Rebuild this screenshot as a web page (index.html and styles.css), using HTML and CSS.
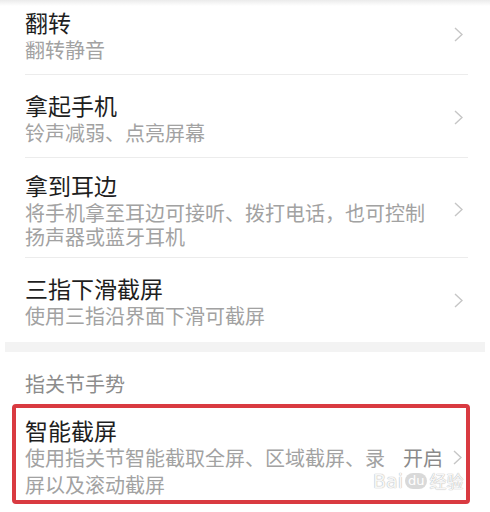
FILE: index.html
```html
<!DOCTYPE html>
<html lang="zh-CN">
<head>
<meta charset="utf-8">
<title>手势设置</title>
<link rel="stylesheet" href="styles.css">
</head>
<body>
<div class="screen">
  <div class="group">
    <div class="row row-first">
      <div class="row-text">
        <div class="title">翻转</div>
        <div class="sub">翻转静音</div>
      </div>
      <svg class="chev" viewBox="0 0 9 15"><polyline points="1,1 8,7.5 1,14"/></svg>
    </div>
    <div class="row">
      <div class="row-text">
        <div class="title">拿起手机</div>
        <div class="sub">铃声减弱、点亮屏幕</div>
      </div>
      <svg class="chev" viewBox="0 0 9 15"><polyline points="1,1 8,7.5 1,14"/></svg>
    </div>
    <div class="row row-multi">
      <div class="row-text">
        <div class="title">拿到耳边</div>
        <div class="sub">将手机拿至耳边可接听、拨打电话，也可控制扬声器或蓝牙耳机</div>
      </div>
      <svg class="chev" viewBox="0 0 9 15"><polyline points="1,1 8,7.5 1,14"/></svg>
    </div>
    <div class="row row-last">
      <div class="row-text">
        <div class="title">三指下滑截屏</div>
        <div class="sub">使用三指沿界面下滑可截屏</div>
      </div>
      <svg class="chev" viewBox="0 0 9 15"><polyline points="1,1 8,7.5 1,14"/></svg>
    </div>
  </div>
  <div class="band"></div>
  <div class="section-header">指关节手势</div>
  <div class="highlight">
    <div class="row-text hl-text">
      <div class="title">智能截屏</div>
      <div class="sub">使用指关节智能截取全屏、区域截屏、录屏以及滚动截屏</div>
    </div>
    <span class="value">开启</span>
    <svg class="chev" viewBox="0 0 9 15"><polyline points="1,1 8,7.5 1,14"/></svg>
    <div class="watermark"><span class="wm-bai">Bai</span><span class="wm-du">du</span><span class="wm-jy">经验</span></div>
  </div>
</div>
</body>
</html>
```
FILE: styles.css
```css
html, body {
  margin: 0;
  padding: 0;
  background: #ffffff;
}
body {
  font-family: "Noto Sans CJK SC", "Noto Sans", sans-serif;
}
.screen {
  width: 490px;
  height: 512px;
  overflow: hidden;
  background: linear-gradient(#ebebeb 0, #ffffff 6px) no-repeat;
  background-size: 100% 6px;
  background-color: #ffffff;
}
.row {
  display: flex;
  align-items: center;
  margin: 0 22px 0 25px;
  padding: 15px 0 12px;
  border-bottom: 1px solid #ececec;
}
.row-first {
  padding-top: 7px;
}
.row-multi {
  padding: 12px 0 8px;
}
.row-last {
  border-bottom: none;
  padding-bottom: 14px;
}
.row-text {
  flex: 1;
  min-width: 0;
  margin-right: 20px;
}
.title {
  font-size: 23px;
  line-height: 30px;
  color: #1e1e1e;
  margin-bottom: 1px;
}
.sub {
  font-size: 20px;
  line-height: 24px;
  color: #a2a2a2;
}
.chev {
  width: 9px;
  height: 15px;
  flex: none;
  margin-right: 5px;
  fill: none;
  stroke: #c6c6c6;
  stroke-width: 1.4;
}
.band {
  height: 10px;
  margin: 0 5px 0 5px;
  background: #f3f3f3;
}
.section-header {
  padding: 17px 0 0 25px;
  font-size: 20px;
  line-height: 30px;
  color: #8c8c8c;
}
.highlight {
  position: relative;
  display: flex;
  align-items: center;
  margin: 5px 20px 0 12px;
  padding: 8px 4px 2px 9px;
  border: 4px solid #d93a41;
  border-radius: 4px;
}
.hl-text {
  margin-right: 15px;
}
.hl-text .title {
  line-height: 28px;
  margin-bottom: 0;
}
.hl-text .sub {
  line-height: 27px;
}
.value {
  flex: none;
  font-size: 20px;
  line-height: 27px;
  color: #8a8a8a;
  margin-right: 10px;
}
.highlight .chev {
  margin-right: 0;
}
.watermark {
  position: absolute;
  left: 357px;
  top: 63px;
  display: flex;
  align-items: center;
  gap: 2px;
  font-family: "DejaVu Sans", sans-serif;
  font-size: 19px;
  line-height: 20px;
  color: rgba(255, 255, 255, 0.9);
  text-shadow: 0 0 1px #b8b8b8, 0 0 1px #b8b8b8;
  pointer-events: none;
}
.wm-du {
  font-size: 13px;
  line-height: 14px;
  padding: 1px 3px;
  border-radius: 8px;
  background: rgba(170, 170, 170, 0.45);
  color: #ffffff;
  text-shadow: none;
}
.wm-jy {
  font-family: "Noto Sans CJK SC", sans-serif;
  font-size: 17px;
}
```
